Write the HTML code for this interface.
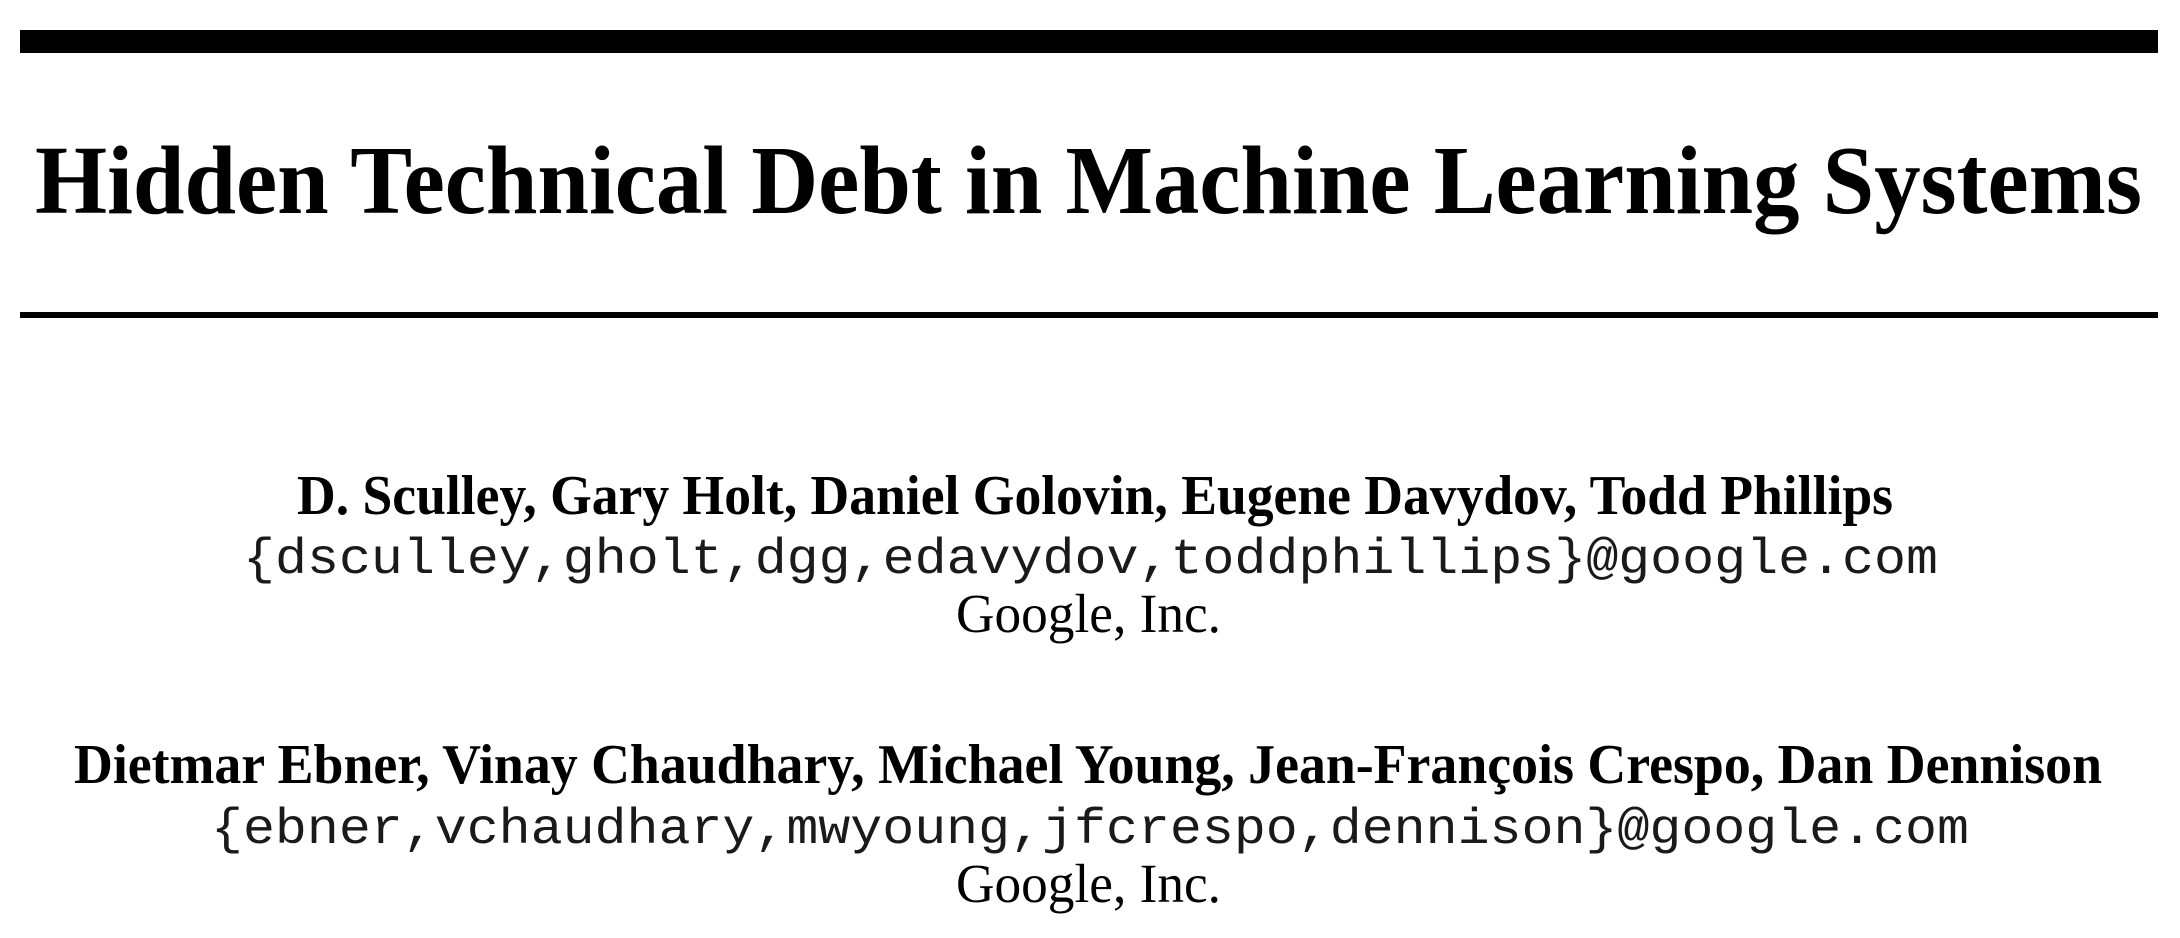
<!DOCTYPE html>
<html><head><meta charset="utf-8"><style>
html,body{margin:0;padding:0;background:#fff;width:2180px;height:938px;overflow:hidden}
svg{display:block}
.s{font-family:"Liberation Serif","DejaVu Serif",serif;fill:#000}
.m{font-family:"Liberation Mono","DejaVu Sans Mono",monospace;fill:#1a1a1a}
</style></head><body>
<svg width="2180" height="938" viewBox="0 0 2180 938" xmlns="http://www.w3.org/2000/svg">
<rect x="20" y="30" width="2138" height="23" fill="#000"/>
<rect x="20" y="312" width="2138" height="6" fill="#000"/>
<text class="s" x="35" y="213" font-size="97" font-weight="bold" textLength="2107" lengthAdjust="spacingAndGlyphs">Hidden Technical Debt in Machine Learning Systems</text>
<text class="s" x="297" y="514" font-size="56" font-weight="bold" textLength="1596" lengthAdjust="spacingAndGlyphs">D. Sculley, Gary Holt, Daniel Golovin, Eugene Davydov, Todd Phillips</text>
<text class="m" x="243" y="573" font-size="50" textLength="1695" lengthAdjust="spacingAndGlyphs">{dsculley,gholt,dgg,edavydov,toddphillips}@google.com</text>
<text class="s" x="956" y="632" font-size="55" textLength="265" lengthAdjust="spacingAndGlyphs">Google, Inc.</text>
<text class="s" x="74" y="783" font-size="56" font-weight="bold" textLength="2028" lengthAdjust="spacingAndGlyphs">Dietmar Ebner, Vinay Chaudhary, Michael Young, Jean-François Crespo, Dan Dennison</text>
<text class="m" x="211" y="843" font-size="50" textLength="1758" lengthAdjust="spacingAndGlyphs">{ebner,vchaudhary,mwyoung,jfcrespo,dennison}@google.com</text>
<text class="s" x="956" y="902" font-size="55" textLength="265" lengthAdjust="spacingAndGlyphs">Google, Inc.</text>
</svg>
</body></html>
